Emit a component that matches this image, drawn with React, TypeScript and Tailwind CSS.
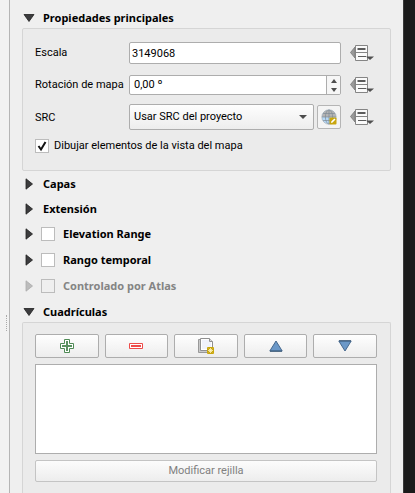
import { useState, type ReactNode } from "react";

function Arrow({ open, disabled }: { open?: boolean; disabled?: boolean }) {
  return (
    <svg width="12" height="12" viewBox="0 0 12 12" aria-hidden="true">
      <path
        d={open ? "M1 2.5h10L6 9.5z" : "M3 .8v10.4L9.5 6z"}
        fill={disabled ? "#bcbcbc" : "#3c3c3e"}
        stroke={disabled ? "#ababab" : "#1f1f1f"}
        strokeWidth=".8"
      />
    </svg>
  );
}

function OverrideIcon() {
  return (
    <svg width="24" height="18" viewBox="0 0 24 18" aria-hidden="true">
      <path d="M5 3v11L.5 8.500z" fill="#999" stroke="#777" strokeWidth=".8" />
      <path d="M5.500 1.500h12v15h-12z" fill="#fafafa" stroke="#858585" />
      <path d="M5.500 8.500h12" stroke="#858585" />
      <path d="M7.500 5h8" stroke="#5c5c5c" strokeWidth="2" />
      <path d="M8 12.500h8" stroke="#5c5c5c" />
      <path d="M16 12.500h8L20 16z" fill="#505050" />
    </svg>
  );
}

function GlobeIcon() {
  return (
    <svg width="16" height="16" viewBox="0 0 16 16" aria-hidden="true">
      <circle cx="8" cy="8" r="7.200" fill="#b7d9f6" />
      <path d="M.8 8a7.200 7.200 0 0 1 14.400 0z" fill="#b4b4b4" />
      <path d="M1 8h14M2 4.500h12M2 11.500h12M8 1v14" stroke="#7f8b95" strokeWidth=".7" fill="none" />
      <ellipse cx="8" cy="8" rx="3.600" ry="7" fill="none" stroke="#7f8b95" strokeWidth=".7" />
      <circle cx="8" cy="8" r="7.200" fill="none" stroke="#98a5b0" strokeWidth=".6" />
      <rect x="8.500" y="8.500" width="7" height="7" rx="1" fill="#c9a60d" />
      <path d="M10 14l.4-1.700 3-2.800 1.100 1.100-2.900 2.900z" fill="#fff" />
    </svg>
  );
}

function PlusIcon() {
  return (
    <svg width="14" height="14" viewBox="0 0 14 14" aria-hidden="true">
      <path d="M4.500.5h5v4h4v5h-4v4h-5v-4h-4v-5h4z" fill="#fff" stroke="#4f8a55" />
      <path d="M7 2v10M2 7h10" stroke="#5a9160" strokeWidth="2" />
    </svg>
  );
}

function MinusIcon() {
  return (
    <svg width="14" height="14" viewBox="0 0 14 14" aria-hidden="true">
      <path d="M.5 4.500h13v5H.5z" fill="#fff" stroke="#ee4b49" />
      <path d="M2 7h10" stroke="#ee4b49" strokeWidth="2" />
    </svg>
  );
}

function DuplicateIcon() {
  return (
    <svg width="16" height="16" viewBox="0 0 16 16" aria-hidden="true">
      <path d="M.5 1.500h3v11h7v2H.5z" fill="#c9c9c9" stroke="#999" />
      <path d="M2.500.5h9l3 3v9h-12z" fill="#fff" stroke="#909090" />
      <path d="M4 2h7v2h2v7H4z" fill="#f0f2fb" />
      <path d="M11.500.5v3h3" fill="#ddd" stroke="#909090" />
      <rect x="9" y="9" width="7" height="7" rx="1" fill="#c9a60d" />
      <path d="M12.500 10v5M10 12.500h5M10.800 10.800l3.400 3.400M14.200 10.800l-3.400 3.400" stroke="#fff6c9" strokeWidth=".8" />
    </svg>
  );
}

function MoveIcon({ down }: { down?: boolean }) {
  return (
    <svg width="14" height="12" viewBox="0 0 14 12" aria-hidden="true">
      <path
        d={down ? "M.8 1h12.400L7 11z" : "M.8 11h12.400L7 1z"}
        fill="#6b98c8"
        stroke="#46688d"
      />
      <path d={down ? "M1 .8h12" : "M1 11.200h12"} stroke="#34516f" />
    </svg>
  );
}

function Tick({ label, disabled, bold, start = false }: { label: string; disabled?: boolean; bold?: boolean; start?: boolean }) {
  const [on, setOn] = useState(start);
  return (
    <label
      className={
        bold
          ? "flex items-center gap-2 font-['Noto_Sans',sans-serif] font-bold"
          : "flex items-center gap-[5px]"
      }
    >
      <span className="grid h-3.5 w-3.5 shrink-0">
        <input
          type="checkbox"
          checked={on}
          disabled={disabled}
          onChange={() => setOn(!on)}
          className="col-start-1 row-start-1 h-3.5 w-3.5 appearance-none border border-[#bcbcbc] bg-white disabled:bg-[#efefef]"
        />
        {on && (
          <svg className="pointer-events-none col-start-1 row-start-1" width="14" height="14" viewBox="0 0 14 14" aria-hidden="true">
            <path d="M3.500 7l2.500 3.500L10.500 3" fill="none" stroke="#111" strokeWidth="2" />
          </svg>
        )}
      </span>
      <span className={disabled ? "text-[#848484]" : ""}>{label}</span>
    </label>
  );
}

function Heading({ open, disabled, title, children }: { open?: boolean; disabled?: boolean; title: string; children?: ReactNode }) {
  return (
    <div className={children ? "flex h-[26px] items-center gap-1.5 pl-px" : "flex h-[25px] items-center pl-px"}>
      <button
        type="button"
        disabled={disabled}
        aria-label={children ? title : undefined}
        className="flex items-center gap-2 font-['Noto_Sans',sans-serif] font-bold"
      >
        <Arrow open={open} disabled={disabled} />
        {!children && title}
      </button>
      {children}
    </div>
  );
}

function OverrideButton({ label }: { label: string }) {
  return (
    <button type="button" aria-label={label} className="mr-[3px] justify-self-end">
      <OverrideIcon />
    </button>
  );
}

function ToolButton({ label, children }: { label: string; children: ReactNode }) {
  return (
    <button
      type="button"
      aria-label={label}
      className="flex h-6 items-center justify-center rounded-[2px] border border-[#adadad] bg-linear-to-b from-[#fefefe] to-[#ededed]"
    >
      {children}
    </button>
  );
}

export default function App() {
  return (
    <div className="flex h-screen overflow-hidden bg-[#efefef] font-[Roboto,'Noto_Sans',sans-serif] text-[11px] leading-4 text-black">
      <div className="flex w-2.5 shrink-0 flex-col items-end border-r border-[#b5b5b5] bg-[#f2f2f2] pt-[315px] pr-0.5">
        <span className="h-4 border-l border-dotted border-[#aaa]" />
      </div>

      <main className="min-w-0 flex-1 px-3 pt-[5px]">
        <Heading open title="Propiedades principales" />
        <section className="-mt-0.5 rounded-[2px] border border-[#d5d5d5] bg-[#ebebeb] pt-[13px] pr-[13px] pb-4 pl-3">
          <div className="grid grid-cols-[94px_1fr_36px] items-center">
            <label htmlFor="scale">Escala</label>
            <input
              id="scale"
              defaultValue="3149068"
              className="h-[22px] w-full min-w-0 rounded-[2px] border border-[#adadad] bg-white px-0.5 outline-none"
            />
            <OverrideButton label="Escala definida por datos" />

            <label htmlFor="rotation" className="mt-2.5">Rotación de mapa</label>
            <div className="mt-[11px] flex h-5 min-w-0 overflow-hidden rounded-[2px] border border-[#adadad] bg-white">
              <input id="rotation" defaultValue="0,00 º" className="w-full min-w-0 flex-1 px-1 outline-none" />
              <div className="flex w-3.5 flex-col border-l border-[#adadad] bg-[#f6f6f6]">
                <button type="button" aria-label="Aumentar" className="flex flex-1 items-center justify-center">
                  <svg width="6" height="4" viewBox="0 0 6 4"><path d="M0 4h6L3 0z" fill="#4d4d4d" /></svg>
                </button>
                <button type="button" aria-label="Reducir" className="flex flex-1 items-center justify-center">
                  <svg width="6" height="4" viewBox="0 0 6 4"><path d="M0 0h6L3 4z" fill="#4d4d4d" /></svg>
                </button>
              </div>
            </div>
            <div className="mt-2.5 grid"><OverrideButton label="Rotación definida por datos" /></div>

            <label htmlFor="crs" className="mt-2.5">SRC</label>
            <div className="mt-[9px] flex min-w-0 items-center gap-[3px]">
              <div className="grid min-w-0 flex-1 items-center">
                <select
                  id="crs"
                  className="col-start-1 row-start-1 h-[26px] w-full appearance-none rounded-[2px] border border-[#adadad] bg-linear-to-b from-[#fefefe] to-[#ededed] px-1 outline-none"
                >
                  <option>Usar SRC del proyecto</option>
                </select>
                <svg className="pointer-events-none col-start-1 row-start-1 mr-[7px] justify-self-end" width="8" height="4" viewBox="0 0 8 4">
                  <path d="M0 0h8L4 4z" fill="#4d4d4d" />
                </svg>
              </div>
              <button
                type="button"
                aria-label="Seleccionar SRC"
                className="flex h-6 w-6 shrink-0 items-center justify-center rounded-[2px] border border-[#b5b5b5] bg-[#f4f4f4]"
              >
                <GlobeIcon />
              </button>
            </div>
            <div className="mt-[9px] grid"><OverrideButton label="SRC definido por datos" /></div>
          </div>
          <div className="mt-2">
            <Tick start label="Dibujar elementos de la vista del mapa" />
          </div>
        </section>

        <div>
          <Heading title="Capas" />
          <Heading title="Extensión" />
          <Heading title="Elevation Range">
            <Tick bold label="Elevation Range" />
          </Heading>
          <Heading title="Rango temporal">
            <Tick bold label="Rango temporal" />
          </Heading>
          <Heading disabled title="Controlado por Atlas">
            <Tick bold disabled label="Controlado por Atlas" />
          </Heading>
          <Heading open title="Cuadrículas" />
        </div>
        <section className="-mt-0.5 rounded-t-[2px] border border-b-0 border-[#d5d5d5] bg-[#ebebeb] pt-[11px] pr-[13px] pb-6 pl-3">
          <div className="grid grid-cols-5 gap-1.5">
            <ToolButton label="Añadir cuadrícula"><PlusIcon /></ToolButton>
            <ToolButton label="Eliminar cuadrícula"><MinusIcon /></ToolButton>
            <ToolButton label="Duplicar cuadrícula"><DuplicateIcon /></ToolButton>
            <ToolButton label="Subir"><MoveIcon /></ToolButton>
            <ToolButton label="Bajar"><MoveIcon down /></ToolButton>
          </div>
          <div role="listbox" aria-label="Cuadrículas" className="mt-1.5 h-[90px] border border-[#adadad] bg-white" />
          <button
            type="button"
            disabled
            className="mt-1.5 h-[22px] w-full rounded-[2px] border border-[#c4c4c4] bg-linear-to-b from-[#fcfcfc] to-[#ededed] text-[#808080]"
          >
            Modificar rejilla
          </button>
        </section>
      </main>

      <div className="w-3 shrink-0 border-l border-[#3a3a3a] bg-[#1b1b1b]" />
    </div>
  );
}
